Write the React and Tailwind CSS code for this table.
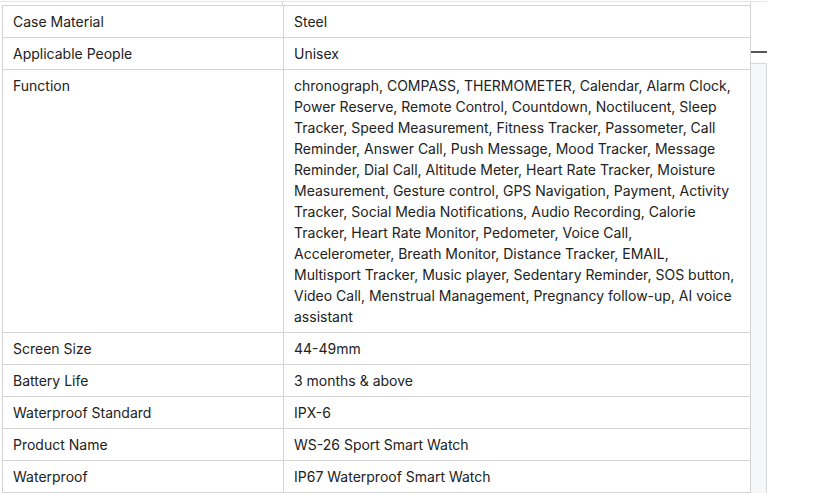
import React from "react";

const rows = [
  ["Case Material", "Steel"],
  ["Applicable People", "Unisex"],
  [
    "Function",
    "chronograph, COMPASS, THERMOMETER, Calendar, Alarm Clock, Power Reserve, Remote Control, Countdown, Noctilucent, Sleep Tracker, Speed Measurement, Fitness Tracker, Passometer, Call Reminder, Answer Call, Push Message, Mood Tracker, Message Reminder, Dial Call, Altitude Meter, Heart Rate Tracker, Moisture Measurement, Gesture control, GPS Navigation, Payment, Activity Tracker, Social Media Notifications, Audio Recording, Calorie Tracker, Heart Rate Monitor, Pedometer, Voice Call, Accelerometer, Breath Monitor, Distance Tracker, EMAIL, Multisport Tracker, Music player, Sedentary Reminder, SOS button, Video Call, Menstrual Management, Pregnancy follow-up, AI voice assistant",
  ],
  ["Screen Size", "44-49mm"],
  ["Battery Life", "3 months & above"],
  ["Waterproof Standard", "IPX-6"],
  ["Product Name", "WS-26 Sport Smart Watch"],
  ["Waterproof", "IP67 Waterproof Smart Watch"],
];

export default function App() {
  return (
    <div
      className="w-[819px] h-[493px] overflow-hidden bg-white text-[14px] leading-[21px] text-[#222]"
      style={{ fontFamily: "Inter, 'Liberation Sans', sans-serif" }}
    >
      {/* row cut off above */}
      <div className="h-[2px] w-[767px] border-b border-[#e6e6e6]" />
      <div className="flex">
        <div className="ml-[2px] w-[749px]">
          <div className="flex h-[3px]">
            <div className="w-[281px] border-r border-[#d4d4d4]" />
            <div className="flex-1 border-r border-[#d4d4d4]" />
          </div>
          <div className="border-l border-t border-[#d4d4d4]">
            {rows.map(([label, value]) => (
              <div key={label} className="flex border-b border-[#d4d4d4]">
                <div className="w-[281px] shrink-0 border-r border-[#d4d4d4] px-[10px] py-[5px]">
                  {label}
                </div>
                <div className="flex-1 border-r border-[#d4d4d4] pl-[10px] pr-[15px] py-[5px]">
                  {value}
                </div>
              </div>
            ))}
          </div>
        </div>
        {/* side rail */}
        <div className="w-[16px] flex flex-col">
          <div className="h-[49px]" />
          <div className="h-[2px] bg-[#555]" />
          <div className="h-[10px]" />
          <div className="flex-1 border-t border-r border-[#d8d8d8] bg-[#f6f7f8]" />
        </div>
      </div>
    </div>
  );
}
